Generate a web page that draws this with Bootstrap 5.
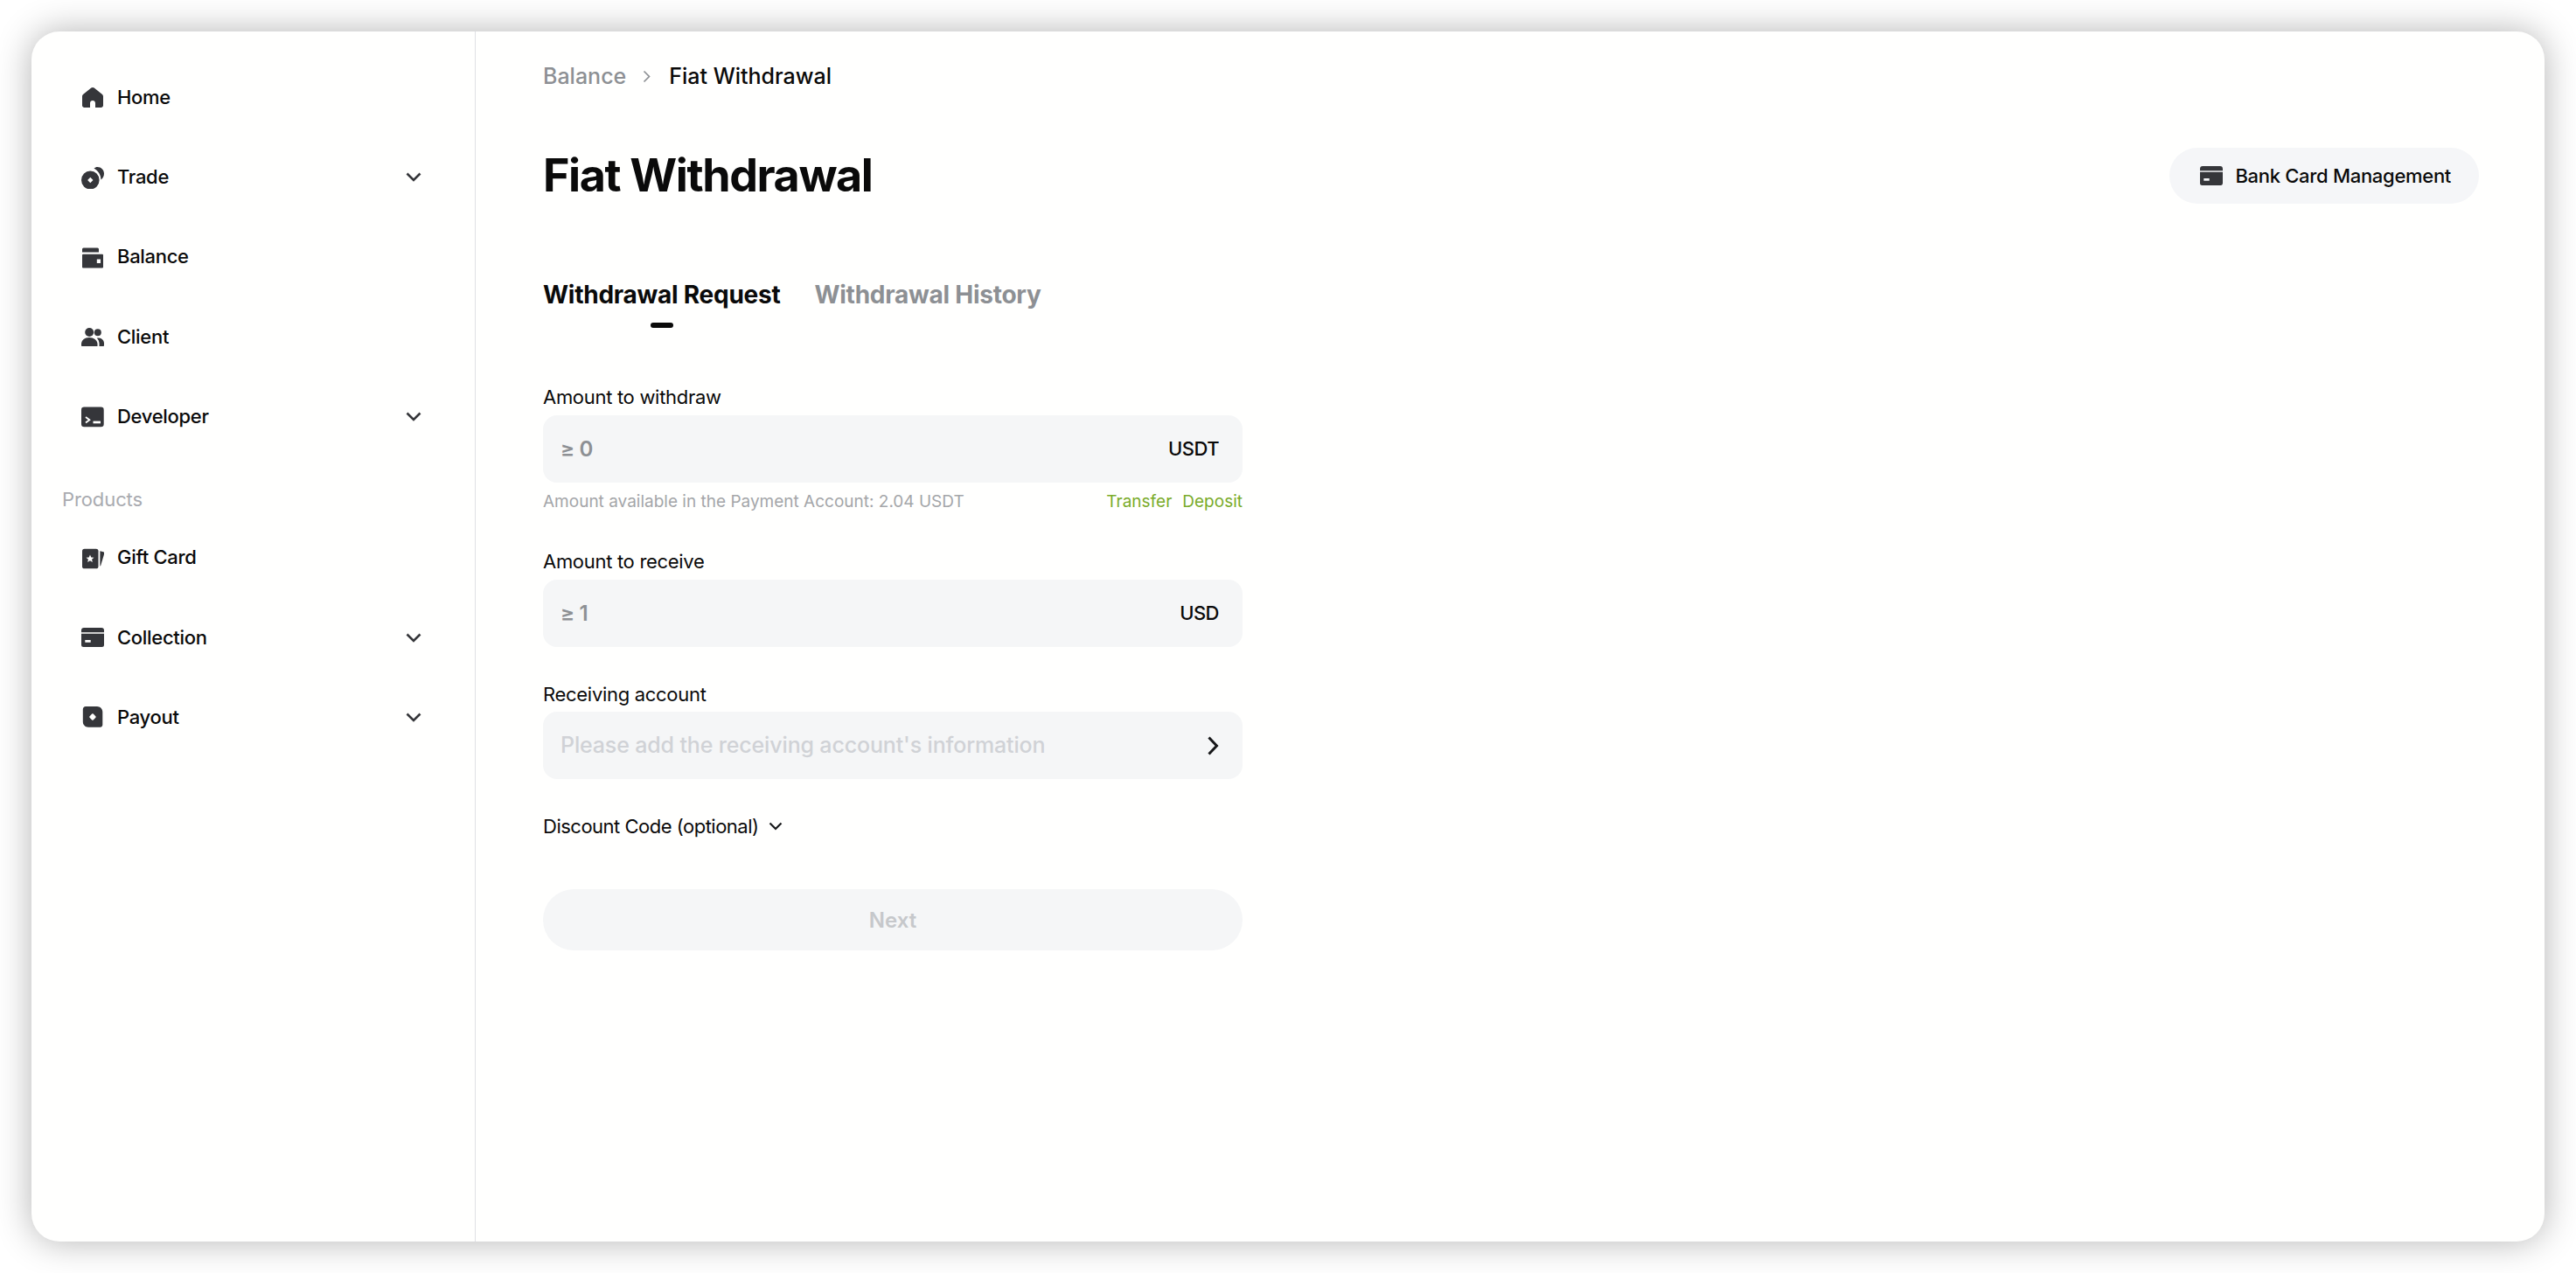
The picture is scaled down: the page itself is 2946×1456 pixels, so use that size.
<!DOCTYPE html>
<html lang="en">
<head>
    <meta charset="UTF-8">
    <meta name="viewport" content="width=device-width, initial-scale=1.0">
    <title>Fiat Withdrawal</title>
    <link href="https://cdn.jsdelivr.net/npm/bootstrap@5.3.0/dist/css/bootstrap.min.css" rel="stylesheet">
    <style>
        html, body { height: 100%; }
        body {
            background: #fff;
            padding: 36px;
            font-family: Inter, "Liberation Sans", sans-serif;
            color: #0a0a0a;
            overflow: hidden;
        }
        .app-window {
            width: 2874px;
            height: 1384px;
            background: #fffffe;
            border-radius: 32px;
            box-shadow: 0 0 40px rgba(0, 0, 0, .3);
            overflow: hidden;
        }
        .side-panel {
            width: 508px;
            flex: none;
            border-right: 1px solid #dfe0e4;
            padding-top: 29.5px;
        }
        .side-item {
            height: 91.4px;
            padding-left: 57px;
            padding-right: 61px;
            font-size: 22px;
            font-weight: 500;
            letter-spacing: -.3px;
            color: #0a0a0a;
            text-decoration: none;
        }
        .side-item:hover { color: #0a0a0a; }
        .side-icon { width: 26px; height: 26px; fill: #35363a; flex: none; margin-right: 15px; }
        .side-heading {
            padding: 33.5px 0 6px 35px;
            font-size: 22px;
            line-height: 30px;
            letter-spacing: -.1px;
            color: #a9abb0;
        }
        .chev { fill: none; stroke: #35363a; stroke-width: 2.6; flex: none; }
        .chev-side { width: 18px; height: 11px; }
        .main-panel { padding: 36px 75px 0 77px; }
        .crumbs { font-size: 25px; line-height: 30px; font-weight: 500; }
        .crumbs a { color: #8d9094; text-decoration: none; }
        .chev-crumb { width: 10px; height: 15px; stroke: #8d9094; stroke-width: 1.7; margin: 0 20px 0 19px; }
        .head-row { margin-top: 66px; height: 65px; }
        .page-heading { font-size: 52px; line-height: 65px; font-weight: 700; margin: 0; letter-spacing: -1.4px; }
        .bank-btn {
            height: 64px;
            padding: 1px 32px 0 35px;
            background: #f5f6f8;
            border: 0;
            border-radius: 32px;
            font-size: 22px;
            font-weight: 500;
            letter-spacing: -.3px;
            color: #0a0a0a;
        }
        .bank-btn:hover, .bank-btn:active { background: #f5f6f8; color: #0a0a0a; }
        .bank-btn .side-icon { margin-right: 14px; }
        .tab-row { margin-top: 87px; gap: 39px; }
        .tab-link { font-size: 28px; line-height: 34px; font-weight: 700; letter-spacing: -.25px; color: #8d9094; text-decoration: none; }
        .tab-link.on { color: #0a0a0a; }
        .tab-mark { width: 26px; height: 6px; background: #0a0a0a; border-radius: 3px; margin: 15px auto 0; }
        .withdraw-form { width: 800px; margin-top: 66px; }
        .field-label { font-size: 22px; line-height: 26px; letter-spacing: -.3px; margin: 0 0 8px; color: #0a0a0a; }
        .field-label.gap-wide { margin-top: 43px; }
        .field-label.gap-mid { margin-top: 41px; margin-bottom: 7px; }
        .field-box {
            height: 77px;
            padding: 0 27px 0 20px;
            background: #f5f6f7;
            border-radius: 16px;
        }
        .field-box .form-control {
            padding: 0;
            border: 0;
            border-radius: 0;
            background: transparent;
            box-shadow: none;
            font-size: 24px;
            font-weight: 600;
            letter-spacing: -.4px;
            color: #0a0a0a;
        }
        .field-box .form-control::placeholder { color: #8d9094; }
        .field-box .form-control.soft { font-size: 25px; font-weight: 500; letter-spacing: -.15px; }
        .field-box .form-control.soft::placeholder { color: #d0d2d6; }
        .unit { font-size: 22px; font-weight: 500; letter-spacing: -.5px; }
        .help-row { margin-top: 10px; font-size: 19px; line-height: 24px; color: #a4a6a9; }
        .help-row a { color: #7aab2a; text-decoration: none; }
        .chev-go { width: 14px; height: 22px; stroke: #17181a; stroke-width: 3; }
        .discount { margin-top: 41px; font-size: 22px; line-height: 26px; letter-spacing: -.5px; }
        .chev-small { width: 16px; height: 10px; stroke: #17181a; stroke-width: 2.2; margin-left: 11px; }
        .next-btn {
            margin-top: 59px;
            height: 70px;
            width: 100%;
            padding-top: 8px;
            background: #f5f6f7;
            border: 0;
            border-radius: 35px;
            font-size: 24px;
            font-weight: 600;
            color: #c6c8cb;
        }
        .next-btn:disabled { background: #f5f6f7; color: #c6c8cb; opacity: 1; }
    </style>
</head>
<body>

    <svg class="d-none">
        <symbol id="i-home" viewBox="0 0 26 26"><path fill-rule="evenodd" d="M13 2c-.6 0-1.200.2-1.700.6l-9 7.200C1.500 10.400 1 11.400 1 12.400V22.500C1 23.900 2.100 25 3.500 25H10v-5c0-1.700 1.300-3 3-3s3 1.300 3 3v5h6.500c1.400 0 2.500-1.100 2.500-2.500V12.400c0-1-.5-2-1.300-2.600l-9-7.200C14.200 2.200 13.600 2 13 2z"/></symbol>
        <symbol id="i-trade" viewBox="0 0 26 26"><path fill-rule="evenodd" d="M10.300 5.500a10.300 10.500 0 1 0 0 21 10.300 10.500 0 1 0 0-21zM10.300 12.800l3.200 3.200-3.200 3.200-3.200-3.200z"/><path d="M14.500 2.600C15.500 1.600 17 1 18.500 1 22.600 1 26 4.400 26 8.500c0 3-1.400 5.500-3.500 7-.2-5.500-3-10-8-12.900z"/></symbol>
        <symbol id="i-wallet" viewBox="0 0 26 26"><path d="M2.500 2.500h16A1.500 1.500 0 0 1 20 4v3.500H1V4a1.500 1.500 0 0 1 1.500-1.500z"/><path fill-rule="evenodd" d="M2 9.700h22a1 1 0 0 1 1 1V24.400a1 1 0 0 1-1 1H2a1 1 0 0 1-1-1V10.700a1 1 0 0 1 1-1zM17.800 15.500V20H22v-4.500z"/></symbol>
        <symbol id="i-client" viewBox="0 0 26 26"><circle cx="9.200" cy="8" r="5"/><circle cx="18.800" cy="8.300" r="4"/><path d="M1 24c-.6 0-1-.4-1-1v-1.500C0 17 4 14 9 14s9.500 3 9.500 7.500V24z"/><path d="M20 14.500c3.500.3 6 2.800 6 6V23c0 .6-.4 1-1 1h-4.500v-3c0-2.500-1-4.800-2.800-6.200.7-.2 1.500-.3 2.300-.3z"/></symbol>
        <symbol id="i-dev" viewBox="0 0 26 26"><rect x="0" y="1.500" width="25.700" height="22.800" rx="3.200"/><path d="M5 13l4.300 3.300L5 19.600" fill="none" stroke="#fffffe" stroke-width="1.900"/><rect x="13.500" y="17.600" width="8.500" height="2.700" fill="#fffffe"/></symbol>
        <symbol id="i-gift" viewBox="0 0 26 26"><rect x="1" y="2.700" width="18.500" height="22.600" rx="2.600"/><path fill="#fffffe" d="M10 9.500l1.300 2.900 3.200.3-2.400 2.100.7 3.100-2.800-1.600-2.800 1.600.7-3.100-2.400-2.100 3.200-.3z"/><path d="M21.400 5.300l3.900 1c.7.200 1.200.9 1 1.600L22.300 21.500l-.9 1.300z"/></symbol>
        <symbol id="i-card" viewBox="0 0 26 26"><path d="M3 2h20a3 3 0 0 1 3 3v2.300H0V5a3 3 0 0 1 3-3z"/><path fill-rule="evenodd" d="M0 8.800h26V21.500a2.500 2.500 0 0 1-2.500 2.500H2.500A2.500 2.500 0 0 1 0 21.500zM4.300 16v2.700h6.400V16z"/></symbol>
        <symbol id="i-payout" viewBox="0 0 26 26"><path fill-rule="evenodd" d="M5 1H18c3.500 0 6.300 2.800 6.300 6.300V22c0 1.500-1.200 2.700-2.700 2.700H8c-3.500 0-6.200-2.800-6.200-6.200V4.200C1.800 2.400 3.200 1 5 1zM13 9.200c-.3 0-.6.100-.8.300l-2.700 2.700c-.4.400-.4 1.100 0 1.500l2.700 2.700c.4.400 1.100.4 1.500 0l2.700-2.700c.4-.4.400-1.100 0-1.500l-2.700-2.700c-.1-.2-.4-.3-.7-.3z"/></symbol>
    </svg>

    <div class="app-window d-flex">

        <!-- Sidebar -->
        <nav class="side-panel d-flex flex-column">
            <a href="#" class="side-item d-flex align-items-center"><svg class="side-icon"><use href="#i-home"/></svg>Home</a>
            <a href="#" class="side-item d-flex align-items-center"><svg class="side-icon"><use href="#i-trade"/></svg>Trade<svg class="chev chev-side ms-auto" viewBox="0 0 18 11"><path d="M1.500 1.500L9 9l7.500-7.500"/></svg></a>
            <a href="#" class="side-item d-flex align-items-center"><svg class="side-icon"><use href="#i-wallet"/></svg>Balance</a>
            <a href="#" class="side-item d-flex align-items-center"><svg class="side-icon"><use href="#i-client"/></svg>Client</a>
            <a href="#" class="side-item d-flex align-items-center"><svg class="side-icon"><use href="#i-dev"/></svg>Developer<svg class="chev chev-side ms-auto" viewBox="0 0 18 11"><path d="M1.500 1.500L9 9l7.500-7.500"/></svg></a>
            <div class="side-heading">Products</div>
            <a href="#" class="side-item d-flex align-items-center"><svg class="side-icon"><use href="#i-gift"/></svg>Gift Card</a>
            <a href="#" class="side-item d-flex align-items-center"><svg class="side-icon"><use href="#i-card"/></svg>Collection<svg class="chev chev-side ms-auto" viewBox="0 0 18 11"><path d="M1.500 1.500L9 9l7.500-7.500"/></svg></a>
            <a href="#" class="side-item d-flex align-items-center"><svg class="side-icon"><use href="#i-payout"/></svg>Payout<svg class="chev chev-side ms-auto" viewBox="0 0 18 11"><path d="M1.500 1.500L9 9l7.500-7.500"/></svg></a>
        </nav>

        <!-- Main -->
        <main class="main-panel flex-grow-1">
            <div class="crumbs d-flex align-items-center">
                <a href="#">Balance</a>
                <svg class="chev chev-crumb" viewBox="0 0 10 15"><path d="M1.500 1.500L7.500 7.500l-6 6"/></svg>
                <span>Fiat Withdrawal</span>
            </div>

            <div class="head-row d-flex align-items-center justify-content-between">
                <h1 class="page-heading">Fiat Withdrawal</h1>
                <button class="btn bank-btn d-flex align-items-center"><svg class="side-icon"><use href="#i-card"/></svg>Bank Card Management</button>
            </div>

            <div class="tab-row d-flex">
                <div>
                    <a href="#" class="tab-link on d-block">Withdrawal Request</a>
                    <div class="tab-mark"></div>
                </div>
                <a href="#" class="tab-link">Withdrawal History</a>
            </div>

            <form class="withdraw-form">
                <label class="field-label d-block">Amount to withdraw</label>
                <div class="field-box d-flex align-items-center">
                    <input type="text" class="form-control" placeholder="≥ 0">
                    <span class="unit">USDT</span>
                </div>
                <div class="help-row d-flex justify-content-between">
                    <span>Amount available in the Payment Account: 2.04 USDT</span>
                    <span class="d-flex gap-2"><a href="#">Transfer</a><a href="#" class="ms-1">Deposit</a></span>
                </div>

                <label class="field-label gap-wide d-block">Amount to receive</label>
                <div class="field-box d-flex align-items-center">
                    <input type="text" class="form-control" placeholder="≥ 1">
                    <span class="unit">USD</span>
                </div>

                <label class="field-label gap-mid d-block">Receiving account</label>
                <div class="field-box d-flex align-items-center">
                    <input type="text" class="form-control soft" placeholder="Please add the receiving account's information">
                    <svg class="chev chev-go" viewBox="0 0 14 22"><path d="M2.500 1.500L11.500 11l-9 9.500"/></svg>
                </div>

                <div class="discount d-flex align-items-center">Discount Code (optional)<svg class="chev chev-small" viewBox="0 0 16 10"><path d="M1.500 1.500L8 8l6.500-6.500"/></svg></div>

                <button type="button" class="btn next-btn" disabled>Next</button>
            </form>
        </main>
    </div>

    <script src="https://cdn.jsdelivr.net/npm/bootstrap@5.3.0/dist/js/bootstrap.bundle.min.js"></script>
</body>
</html>
